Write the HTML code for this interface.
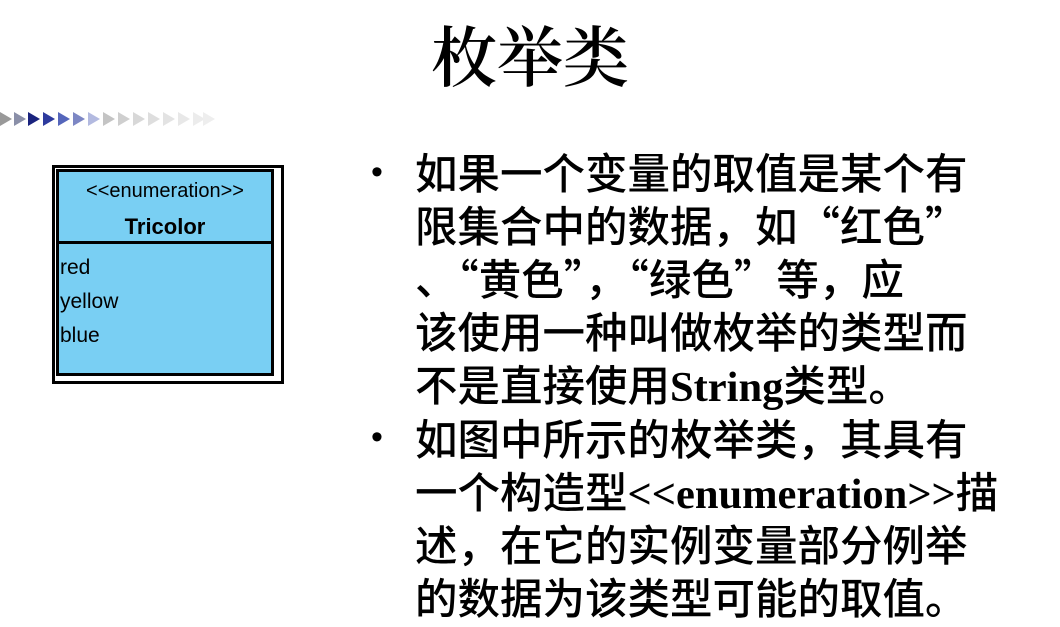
<!DOCTYPE html><html><head><meta charset="utf-8"><style>
body{margin:0;width:1060px;height:624px;background:#fff;position:relative;overflow:hidden;font-family:"Liberation Serif","Noto Serif CJK SC","Noto Sans CJK SC",serif}
.t{position:absolute;left:0;width:1060px;top:8px;text-align:center;font-size:66px;line-height:90px;font-family:"Noto Serif CJK SC",serif;font-weight:600}
.l{position:absolute;left:415px;font-size:42.5px;line-height:53px;height:53px;white-space:nowrap;font-family:"Liberation Serif","Noto Sans CJK SC",serif;font-weight:500}
.q{font-family:"Noto Sans CJK SC",sans-serif;line-height:1}
.b{position:absolute;left:371px;font-size:34px;font-family:"Liberation Sans",sans-serif}
.box{position:absolute;left:52px;top:165px;width:226px;height:213px;border:3px solid #000;background:#fff}
.in{position:absolute;left:1px;top:1px;width:212px;height:201px;border:3px solid #000;background:#79cff3;font-family:"Liberation Sans",sans-serif}
</style></head><body>
<svg style="position:absolute;left:0;top:111px" width="230" height="16">
<polygon points="0,1 12,8 0,15" fill="#999"/>
<polygon points="14,1 26,8 14,15" fill="#8a8fa8"/>
<polygon points="28,1 40,8 28,15" fill="#1a237e"/>
<polygon points="43,1 55,8 43,15" fill="#2e3b9e"/>
<polygon points="58,1 70,8 58,15" fill="#5566bb"/>
<polygon points="73,1 85,8 73,15" fill="#7d87c4"/>
<polygon points="88,1 100,8 88,15" fill="#b3bae0"/>
<polygon points="103,1 115,8 103,15" fill="#c4c4c4"/>
<polygon points="118,1 130,8 118,15" fill="#cfcfcf"/>
<polygon points="133,1 145,8 133,15" fill="#d8d8d8"/>
<polygon points="148,1 160,8 148,15" fill="#dedede"/>
<polygon points="163,1 175,8 163,15" fill="#e3e3e3"/>
<polygon points="178,1 190,8 178,15" fill="#e8e8e8"/>
<polygon points="193,1 205,8 193,15" fill="#ececec"/>
<polygon points="203,1 215,8 203,15" fill="#eee"/>
</svg>
<div class="t">枚举类</div>
<div class="box"><div class="in">
<div style="position:absolute;top:8px;width:100%;text-align:center;font-size:20px">&lt;&lt;enumeration&gt;&gt;</div>
<div style="position:absolute;top:42px;width:100%;text-align:center;font-size:22px;font-weight:bold">Tricolor</div>
<div style="position:absolute;top:69px;left:0;width:100%;border-top:3px solid #000"></div>
<div style="position:absolute;top:79px;left:1px;font-size:21px;line-height:34px">red<br>yellow<br>blue</div>
</div></div>
<div class="b" style="top:153px">•</div>
<div class="b" style="top:418px">•</div>
<div class="l" style="top:149px">如果一个变量的取值是某个有</div>
<div class="l" style="top:202px">限集合中的数据，如<span class="q">“</span>红色<span class="q">”</span></div>
<div class="l" style="top:255px">、<span class="q">“</span>黄色<span class="q">”</span>，<span class="q">“</span>绿色<span class="q">”</span>等，应</div>
<div class="l" style="top:308px">该使用一种叫做枚举的类型而</div>
<div class="l" style="top:361px">不是直接使用<b>String</b>类型。</div>
<div class="l" style="top:415px">如图中所示的枚举类，其具有</div>
<div class="l" style="top:468px">一个构造型<b>&lt;&lt;enumeration&gt;&gt;</b>描</div>
<div class="l" style="top:521px">述，在它的实例变量部分例举</div>
<div class="l" style="top:574px">的数据为该类型可能的取值。</div>
</body></html>
